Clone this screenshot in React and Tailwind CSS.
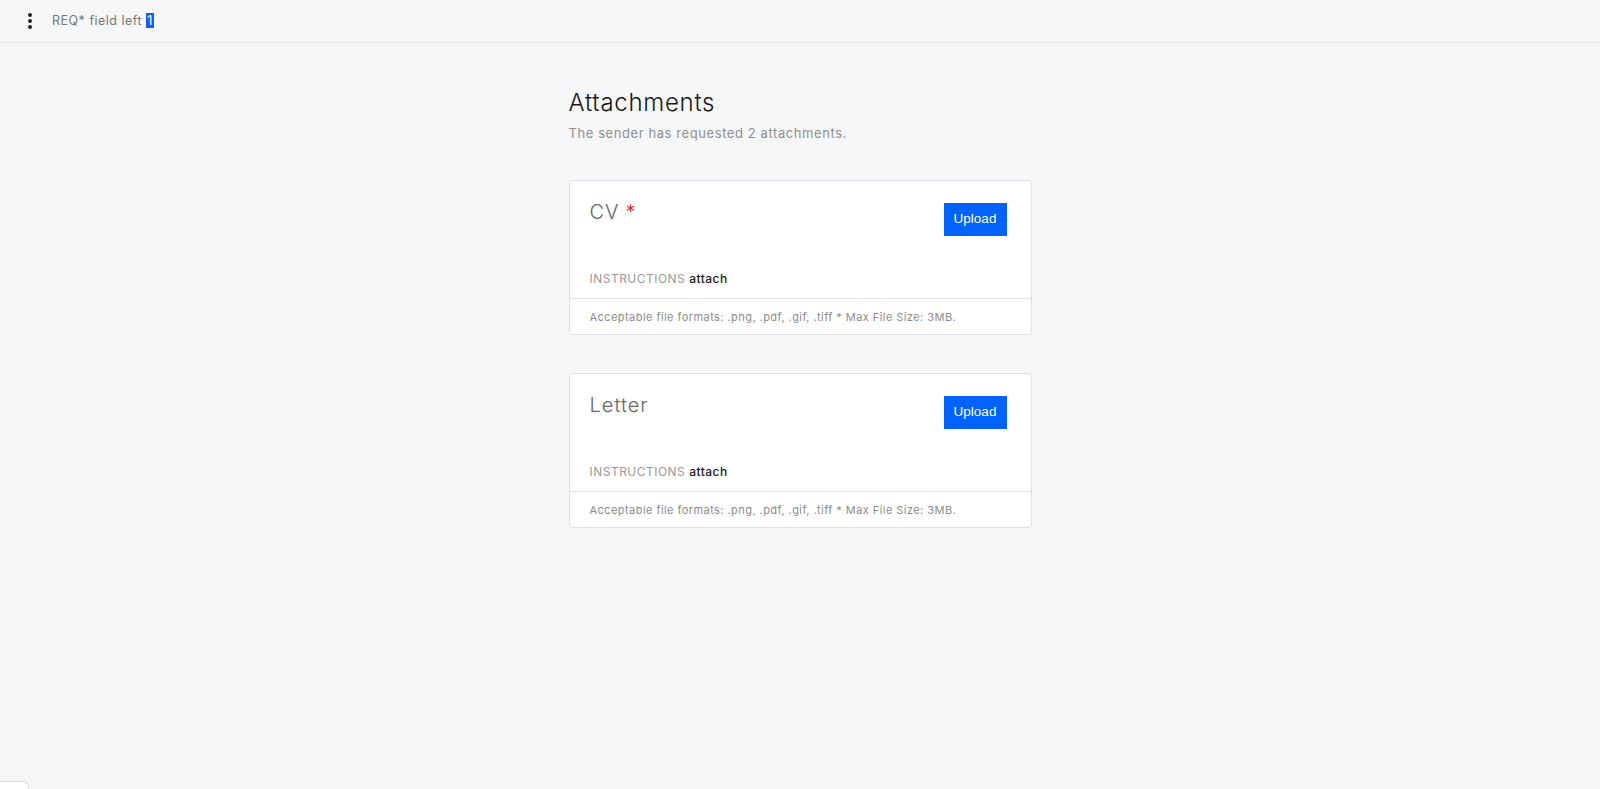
import React from 'react'

const font = { fontFamily: 'Inter, "Liberation Sans", sans-serif' }

function AttachmentCard({ title, required }) {
  return (
    <div className="rounded-[3px] border border-[#dfe1e5] bg-white">
      <div className="px-[20px] pt-[22px] pb-[11px]">
        <div className="flex items-start justify-between">
          <h2 className="mt-[-5px] text-[20px] leading-[28px] font-light tracking-[0.05em] text-[#666]">
            {title}
            {required && <span className="ml-[6px] text-[#e81818]">*</span>}
          </h2>
          <button className="mr-[4px] h-[33px] w-[63px] bg-[#0062ff] text-[13.5px] text-white" style={{ fontFamily: '"Liberation Sans", Arial, sans-serif' }}>
            Upload
          </button>
        </div>
        <p className="mt-[35px] text-[12px] leading-[16px] tracking-[0.04em] text-[#999]">
          INSTRUCTIONS <span className="font-medium text-[#1a1a1a]">attach</span>
        </p>
      </div>
      <div className="border-t border-[#e1e3e6] px-[20px] pt-[11px] pb-[10px] text-[11px] leading-[14px] tracking-[0.04em] text-[#8c8c8c]">
        Acceptable file formats: .png, .pdf, .gif, .tiff * Max File Size: 3MB.
      </div>
    </div>
  )
}

export default function App() {
  return (
    <div className="relative min-h-[789px] bg-[#f6f7f9]" style={font}>
      <header className="flex h-[43px] items-center border-b border-[#e3e5e8] pl-[26px]">
        <div className="flex h-[16px] w-[8px] flex-col items-center justify-between">
          <span className="h-[4px] w-[4px] rounded-full bg-[#222]" />
          <span className="h-[4px] w-[4px] rounded-full bg-[#222]" />
          <span className="h-[4px] w-[4px] rounded-full bg-[#222]" />
        </div>
        <span className="ml-[18px] text-[12.5px] tracking-[0.04em] text-[#777]">
          REQ* field left <span className="bg-[#1a5dfb] px-[1px] text-white">1</span>
        </span>
      </header>

      <main className="mx-auto w-[463px] pt-[45px]">
        <h1 className="text-[24px] leading-[30px] font-light tracking-[0.03em] text-[#161616]">Attachments</h1>
        <p className="mt-[7px] text-[13px] leading-[16px] tracking-[0.045em] text-[#8f8f8f]">
          The sender has requested 2 attachments.
        </p>
        <div className="mt-[39px] flex flex-col gap-[38px]">
          <AttachmentCard title="CV" required />
          <AttachmentCard title="Letter" />
        </div>
      </main>

      <div className="absolute bottom-0 left-0 h-[8px] w-[29px] rounded-tr-[6px] border-t border-r border-[#dcdcdc] bg-white" />
    </div>
  )
}
